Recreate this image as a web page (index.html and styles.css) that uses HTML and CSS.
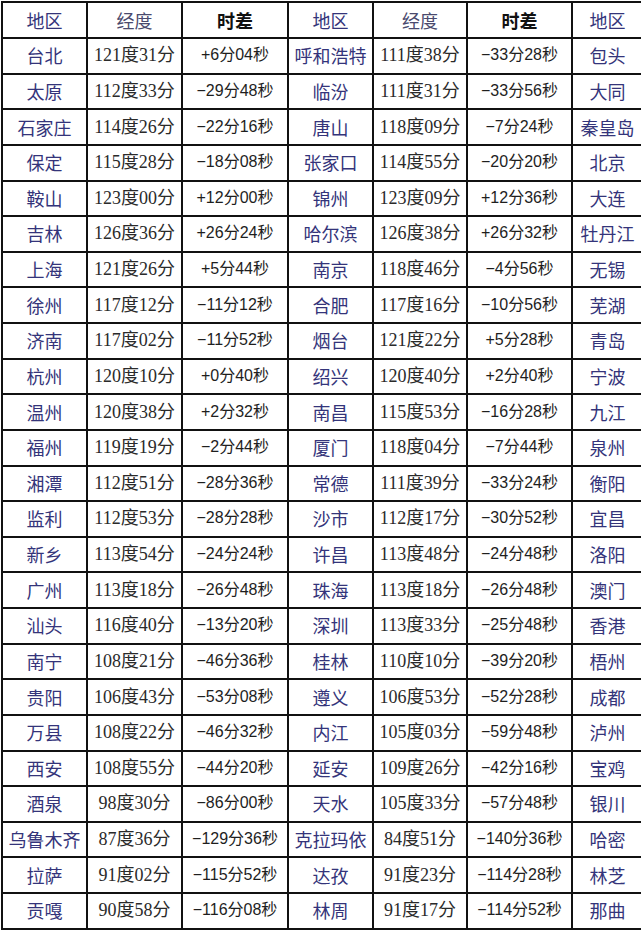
FILE: index.html
```html
<!DOCTYPE html>
<html lang="zh-CN">
<head>
<meta charset="utf-8">
<title>各地时差表</title>
<link rel="stylesheet" href="styles.css">
</head>
<body>
<table class="tz">
<colgroup>
<col class="c-place"><col class="c-lon"><col class="c-diff">
<col class="c-place2"><col class="c-lon2"><col class="c-diff2">
<col class="c-place3">
</colgroup>
<thead>
<tr class="head">
<th class="place">地区</th><th class="lon">经度</th><th class="diff">时差</th>
<th class="place">地区</th><th class="lon">经度</th><th class="diff">时差</th>
<th class="place">地区</th>
</tr>
</thead>
<tbody>
<tr><td class="place">台北</td><td class="lon">121度31分</td><td class="diff">+6分04秒</td><td class="place">呼和浩特</td><td class="lon">111度38分</td><td class="diff">−33分28秒</td><td class="place">包头</td></tr>
<tr><td class="place">太原</td><td class="lon">112度33分</td><td class="diff">−29分48秒</td><td class="place">临汾</td><td class="lon">111度31分</td><td class="diff">−33分56秒</td><td class="place">大同</td></tr>
<tr><td class="place">石家庄</td><td class="lon">114度26分</td><td class="diff">−22分16秒</td><td class="place">唐山</td><td class="lon">118度09分</td><td class="diff">−7分24秒</td><td class="place">秦皇岛</td></tr>
<tr><td class="place">保定</td><td class="lon">115度28分</td><td class="diff">−18分08秒</td><td class="place">张家口</td><td class="lon">114度55分</td><td class="diff">−20分20秒</td><td class="place">北京</td></tr>
<tr><td class="place">鞍山</td><td class="lon">123度00分</td><td class="diff">+12分00秒</td><td class="place">锦州</td><td class="lon">123度09分</td><td class="diff">+12分36秒</td><td class="place">大连</td></tr>
<tr><td class="place">吉林</td><td class="lon">126度36分</td><td class="diff">+26分24秒</td><td class="place">哈尔滨</td><td class="lon">126度38分</td><td class="diff">+26分32秒</td><td class="place">牡丹江</td></tr>
<tr><td class="place">上海</td><td class="lon">121度26分</td><td class="diff">+5分44秒</td><td class="place">南京</td><td class="lon">118度46分</td><td class="diff">−4分56秒</td><td class="place">无锡</td></tr>
<tr><td class="place">徐州</td><td class="lon">117度12分</td><td class="diff">−11分12秒</td><td class="place">合肥</td><td class="lon">117度16分</td><td class="diff">−10分56秒</td><td class="place">芜湖</td></tr>
<tr><td class="place">济南</td><td class="lon">117度02分</td><td class="diff">−11分52秒</td><td class="place">烟台</td><td class="lon">121度22分</td><td class="diff">+5分28秒</td><td class="place">青岛</td></tr>
<tr><td class="place">杭州</td><td class="lon">120度10分</td><td class="diff">+0分40秒</td><td class="place">绍兴</td><td class="lon">120度40分</td><td class="diff">+2分40秒</td><td class="place">宁波</td></tr>
<tr><td class="place">温州</td><td class="lon">120度38分</td><td class="diff">+2分32秒</td><td class="place">南昌</td><td class="lon">115度53分</td><td class="diff">−16分28秒</td><td class="place">九江</td></tr>
<tr><td class="place">福州</td><td class="lon">119度19分</td><td class="diff">−2分44秒</td><td class="place">厦门</td><td class="lon">118度04分</td><td class="diff">−7分44秒</td><td class="place">泉州</td></tr>
<tr><td class="place">湘潭</td><td class="lon">112度51分</td><td class="diff">−28分36秒</td><td class="place">常德</td><td class="lon">111度39分</td><td class="diff">−33分24秒</td><td class="place">衡阳</td></tr>
<tr><td class="place">监利</td><td class="lon">112度53分</td><td class="diff">−28分28秒</td><td class="place">沙市</td><td class="lon">112度17分</td><td class="diff">−30分52秒</td><td class="place">宜昌</td></tr>
<tr><td class="place">新乡</td><td class="lon">113度54分</td><td class="diff">−24分24秒</td><td class="place">许昌</td><td class="lon">113度48分</td><td class="diff">−24分48秒</td><td class="place">洛阳</td></tr>
<tr><td class="place">广州</td><td class="lon">113度18分</td><td class="diff">−26分48秒</td><td class="place">珠海</td><td class="lon">113度18分</td><td class="diff">−26分48秒</td><td class="place">澳门</td></tr>
<tr><td class="place">汕头</td><td class="lon">116度40分</td><td class="diff">−13分20秒</td><td class="place">深圳</td><td class="lon">113度33分</td><td class="diff">−25分48秒</td><td class="place">香港</td></tr>
<tr><td class="place">南宁</td><td class="lon">108度21分</td><td class="diff">−46分36秒</td><td class="place">桂林</td><td class="lon">110度10分</td><td class="diff">−39分20秒</td><td class="place">梧州</td></tr>
<tr><td class="place">贵阳</td><td class="lon">106度43分</td><td class="diff">−53分08秒</td><td class="place">遵义</td><td class="lon">106度53分</td><td class="diff">−52分28秒</td><td class="place">成都</td></tr>
<tr><td class="place">万县</td><td class="lon">108度22分</td><td class="diff">−46分32秒</td><td class="place">内江</td><td class="lon">105度03分</td><td class="diff">−59分48秒</td><td class="place">泸州</td></tr>
<tr><td class="place">西安</td><td class="lon">108度55分</td><td class="diff">−44分20秒</td><td class="place">延安</td><td class="lon">109度26分</td><td class="diff">−42分16秒</td><td class="place">宝鸡</td></tr>
<tr><td class="place">酒泉</td><td class="lon">98度30分</td><td class="diff">−86分00秒</td><td class="place">天水</td><td class="lon">105度33分</td><td class="diff">−57分48秒</td><td class="place">银川</td></tr>
<tr><td class="place">乌鲁木齐</td><td class="lon">87度36分</td><td class="diff">−129分36秒</td><td class="place">克拉玛依</td><td class="lon">84度51分</td><td class="diff">−140分36秒</td><td class="place">哈密</td></tr>
<tr><td class="place">拉萨</td><td class="lon">91度02分</td><td class="diff">−115分52秒</td><td class="place">达孜</td><td class="lon">91度23分</td><td class="diff">−114分28秒</td><td class="place">林芝</td></tr>
<tr><td class="place">贡嘎</td><td class="lon">90度58分</td><td class="diff">−116分08秒</td><td class="place">林周</td><td class="lon">91度17分</td><td class="diff">−114分52秒</td><td class="place">那曲</td></tr>
</tbody>
</table>
</body>
</html>
```

FILE: styles.css
```css
html, body {
  margin: 0;
  padding: 0;
  background: #ffffff;
  overflow: hidden;
}

.tz {
  border-collapse: collapse;
  table-layout: fixed;
  width: 641px;
  margin: 1px 0 0 1px;
  font-family: "Noto Sans CJK SC", sans-serif;
  font-size: 18px;
}

.c-place { width: 85px; }
.c-lon { width: 95px; }
.c-diff { width: 106px; }
.c-place2 { width: 85px; }
.c-lon2 { width: 94px; }
.c-diff2 { width: 105px; }
.c-place3 { width: 71px; }

.tz th,
.tz td {
  border: 2px solid #111111;
  padding: 0 0 1px;
  text-align: center;
  vertical-align: middle;
  white-space: nowrap;
  overflow: hidden;
  line-height: 20px;
}

.tz .head {
  height: 36px;
}

.tz .head th {
  font-weight: 400;
}

.tz tbody tr {
  height: 35.64px;
}

.tz .place {
  color: #34347a;
  font-family: "Noto Sans CJK SC", sans-serif;
}

.tz .lon {
  color: #2a2a2a;
  font-family: "Liberation Serif", "Noto Sans CJK SC", serif;
}

.tz .diff {
  color: #1e1e1e;
  font-family: "Liberation Sans", "Noto Sans CJK SC", sans-serif;
  font-size: 16px;
}

.tz .head th.lon {
  color: #4a4a6e;
  font-family: "Noto Sans CJK SC", sans-serif;
  font-size: 18px;
}

.tz .head th.diff {
  color: #111111;
  font-weight: 700;
  font-size: 18px;
  font-family: "Noto Sans CJK SC", sans-serif;
}
```
